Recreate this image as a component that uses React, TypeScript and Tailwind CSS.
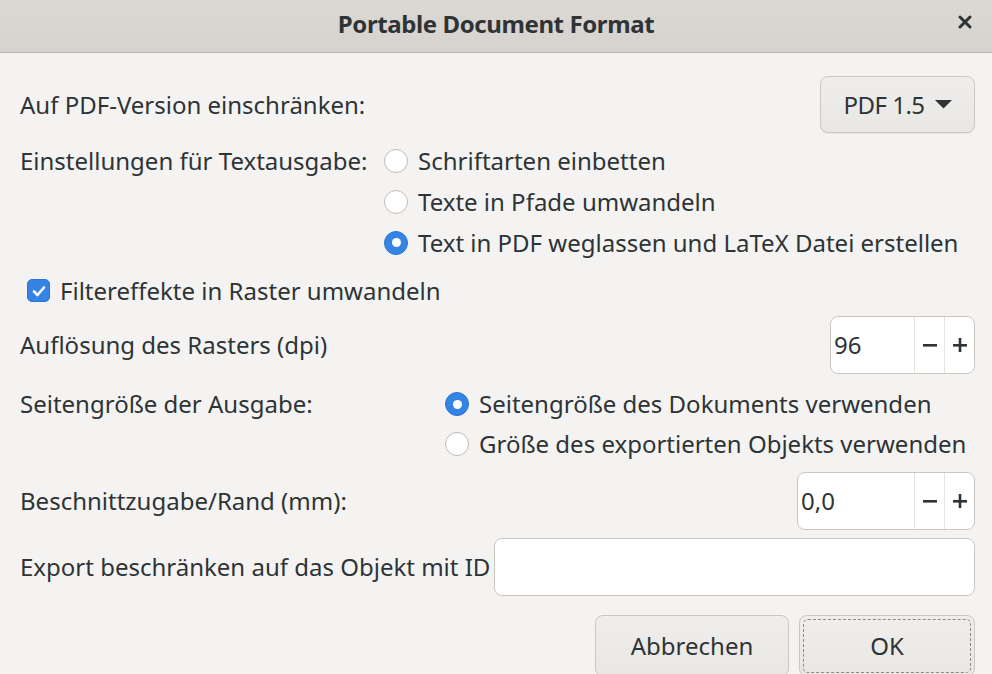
import React from 'react'

const font = { fontFamily: '"Noto Sans", "DejaVu Sans", sans-serif' }

function Radio({ checked, label }: { checked?: boolean; label: string }) {
  return (
    <div className="flex items-center h-full gap-[10px]">
      {checked ? (
        <span className="w-[24px] h-[24px] rounded-full bg-[#3584e4] border border-[#2a76d4] flex items-center justify-center shrink-0">
          <span className="w-[9px] h-[9px] rounded-full bg-white" />
        </span>
      ) : (
        <span className="w-[24px] h-[24px] rounded-full bg-white border border-[#c2bbb4] shrink-0" />
      )}
      <span className="whitespace-nowrap">{label}</span>
    </div>
  )
}

function SpinButton({ value, width }: { value: string; width: string }) {
  return (
    <div className={`${width} h-[58px] flex bg-white border border-[#cdc7c2] rounded-[8px] overflow-hidden`}>
      <div className="flex-1 flex items-center pl-[3px] text-[#2e3436]">{value}</div>
      <div className="w-[30px] border-l border-[#e6e3e0] flex items-center justify-center">
        <svg width="16" height="16" viewBox="0 0 16 16">
          <rect x="1" y="7" width="14" height="2.6" fill="#2e3436" />
        </svg>
      </div>
      <div className="w-[30px] border-l border-[#e6e3e0] flex items-center justify-center">
        <svg width="16" height="16" viewBox="0 0 16 16">
          <rect x="1" y="7" width="14" height="2.6" fill="#2e3436" />
          <rect x="6.7" y="1" width="2.6" height="14" fill="#2e3436" />
        </svg>
      </div>
    </div>
  )
}

export default function App() {
  return (
    <div className="w-[992px] h-[674px] overflow-hidden bg-[#f4f3f2] text-[#2e3436] text-[24px] leading-none" style={font}>
      {/* Header bar */}
      <div className="h-[53px] bg-gradient-to-b from-[#dcd8d4] to-[#d6d2cd] border-b border-[#bcb5ad] flex items-center justify-center relative pb-[4px]">
        <span className="font-bold text-[24px] tracking-[-0.4px] text-[#2e3436]">Portable Document Format</span>
        <span className="absolute right-[16px] top-[11px] w-[22px] h-[22px] flex items-center justify-center">
          <svg width="14" height="14" viewBox="0 0 14 14">
            <path d="M2 2 L12 12 M12 2 L2 12" stroke="#2e3436" strokeWidth="3" strokeLinecap="round" />
          </svg>
        </span>
      </div>

      <div className="pt-[23px] pl-[20px] pr-[17px] flex flex-col">
        {/* PDF version */}
        <div className="h-[57px] flex items-center justify-between">
          <span>Auf PDF-Version einschränken:</span>
          <button className="w-[155px] h-[57px] rounded-[8px] border border-[#cdc7c2] bg-gradient-to-b from-[#f0eeec] to-[#e9e7e4] shadow-[0_1px_0_rgba(0,0,0,0.06)] flex items-center justify-center gap-[10px] text-[#2e3436]">
            <span className="tracking-[-0.5px]">PDF 1.5</span>
            <svg width="17" height="9" viewBox="0 0 17 9">
              <path d="M0 0 L17 0 L8.5 8.5 Z" fill="#2e3436" />
            </svg>
          </button>
        </div>

        {/* Text output */}
        <div className="mt-[7px] flex">
          <div className="w-[364px] h-[41px] flex items-center whitespace-nowrap">Einstellungen für Textausgabe:</div>
          <div className="flex flex-col">
            <div className="h-[41px]"><Radio label="Schriftarten einbetten" /></div>
            <div className="h-[41px]"><Radio label="Texte in Pfade umwandeln" /></div>
            <div className="h-[41px]"><Radio checked label="Text in PDF weglassen und LaTeX Datei erstellen" /></div>
          </div>
        </div>

        {/* Filter effects checkbox */}
        <div className="mt-[7px] h-[41px] flex items-center gap-[10px] pl-[7px]">
          <span className="w-[23px] h-[23px] rounded-[5px] bg-[#3584e4] border border-[#2a76d4] flex items-center justify-center">
            <svg width="16" height="16" viewBox="0 0 16 16">
              <path d="M3 8.5 L6.5 12 L13 4.5" fill="none" stroke="white" strokeWidth="2.6" strokeLinecap="round" strokeLinejoin="round" />
            </svg>
          </span>
          <span>Filtereffekte in Raster umwandeln</span>
        </div>

        {/* Resolution */}
        <div className="mt-[5px] h-[58px] flex items-center justify-between">
          <span>Auflösung des Rasters (dpi)</span>
          <SpinButton value="96" width="w-[145px]" />
        </div>

        {/* Page size */}
        <div className="mt-[10px] flex">
          <div className="w-[425px] h-[40px] flex items-center">Seitengröße der Ausgabe:</div>
          <div className="flex flex-col">
            <div className="h-[40px]"><Radio checked label="Seitengröße des Dokuments verwenden" /></div>
            <div className="h-[40px]"><Radio label="Größe des exportierten Objekts verwenden" /></div>
          </div>
        </div>

        {/* Bleed */}
        <div className="mt-[8px] h-[58px] flex items-center justify-between">
          <span>Beschnittzugabe/Rand (mm):</span>
          <SpinButton value="0,0" width="w-[178px]" />
        </div>

        {/* Export ID */}
        <div className="mt-[8px] h-[58px] flex items-center gap-[4px]">
          <span className="whitespace-nowrap">Export beschränken auf das Objekt mit ID</span>
          <div className="flex-1 h-[58px] bg-white border border-[#cdc7c2] rounded-[8px]" />
        </div>

        {/* Actions */}
        <div className="mt-[19px] flex justify-end gap-[10px]">
          <button className="w-[194px] h-[62px] rounded-[8px] border border-[#cdc7c2] bg-gradient-to-b from-[#f0eeec] to-[#e9e7e4] text-[#2e3436]">
            Abbrechen
          </button>
          <button className="w-[176px] h-[62px] rounded-[8px] border border-[#cdc7c2] bg-gradient-to-b from-[#f0eeec] to-[#e9e7e4] p-[3px]">
            <span className="w-full h-full flex items-center justify-center border border-dashed border-[#8d8a87] rounded-[5px] text-[#2e3436]">OK</span>
          </button>
        </div>
      </div>
    </div>
  )
}
